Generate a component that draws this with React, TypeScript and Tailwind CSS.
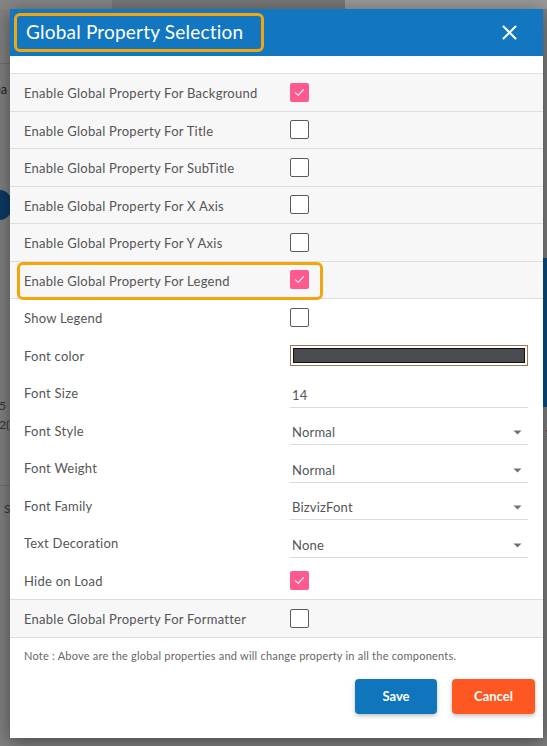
import React from "react";

const Check = ({ on }: { on: boolean }) =>
  on ? (
    <div className="w-[19px] h-[19px] rounded-[2px] bg-[#ff5a8e] flex items-center justify-center">
      <svg width="13" height="13" viewBox="0 0 13 13" fill="none">
        <path d="M2.5 6.8 L5.2 9.3 L10.5 3.6" stroke="white" strokeWidth="1.1" strokeLinecap="round" strokeLinejoin="round" />
      </svg>
    </div>
  ) : (
    <div className="w-[19px] h-[19px] rounded-[2px] border border-[#5a5a5a] bg-white" />
  );

const Caret = () => (
  <svg width="9" height="5" viewBox="0 0 9 5" className="mr-[6px]">
    <path d="M0.5 0.5 L8.5 0.5 L4.5 4.5 Z" fill="#707070" />
  </svg>
);

const GlobalRow = ({ label, on }: { label: string; on: boolean }) => (
  <div className="h-[37.5px] flex items-center bg-[#f7f7f7] border-b border-[#dedede]">
    <div className="w-[280px] pl-[14px] pt-[3px] text-[13px] tracking-[0.25px] text-[#555]">{label}</div>
    <Check on={on} />
  </div>
);

const SubRow = ({ label, children }: { label: string; children: React.ReactNode }) => (
  <div className="h-[37.5px] flex items-center">
    <div className="w-[280px] pl-[14px] pt-[2px] text-[13px] tracking-[0.25px] text-[#555]">{label}</div>
    {children}
  </div>
);

const Underlined = ({ value, caret }: { value: string; caret?: boolean }) => (
  <div className="w-[238px] h-[24px] mt-[6px] border-b border-[#dadada] flex items-center justify-between pl-[2px]">
    <span className="text-[13px] tracking-[0.2px] text-[#555]">{value}</span>
    {caret && <Caret />}
  </div>
);

export default function App() {
  return (
    <div className="relative w-[547px] h-[746px] overflow-hidden bg-[#808080] font-['Lato',sans-serif]">
      {/* page glimpses under overlay */}
      <div className="absolute left-0 top-0 w-[112px] h-[9px] bg-[#858585]" />
      <div className="absolute left-[112px] top-0 w-[233px] h-[9px] bg-[#777777]" />
      <div className="absolute left-[345px] top-0 w-[202px] h-[9px] bg-[#999999]" />
      <div className="absolute left-0 top-[63px] w-[10px] h-px bg-[#6e6e6e]" />
      <div className="absolute left-[-6px] top-[80px] text-[13px] text-[#222]">ea</div>
      <div className="absolute left-[-14px] top-[190px] w-[26px] h-[30px] rounded-full bg-[#0c3a66]" />
      <div className="absolute left-[-1px] top-[397px] text-[12px] text-[#333]">5</div>
      <div className="absolute left-[-1px] top-[416px] text-[12px] text-[#333]">2(</div>
      <div className="absolute left-0 top-[485px] w-[10px] h-px bg-[#6e6e6e]" />
      <div className="absolute left-[4px] top-[500px] text-[12px] text-[#333]">S</div>
      <div className="absolute left-[543px] top-[258px] w-[4px] h-[149px] bg-[#0b4f82]" />
      <div className="absolute left-[545px] top-[424px] text-[12px] text-[#333]">1</div>

      {/* modal */}
      <div className="absolute left-[10px] top-[9px] w-[533px] h-[729px] bg-white shadow-[0_4px_18px_rgba(0,0,0,0.45)]">
        <div className="h-[47px] bg-[#1277c0] flex items-center justify-between pl-[4px] pr-[26px]">
          <div className="h-[39px] w-[250px] border-[3px] border-[#f5a50c] rounded-[6px] flex items-center pl-[9px]">
            <span className="text-[19px] text-white tracking-[0.2px]">Global Property Selection</span>
          </div>
          <svg width="15" height="15" viewBox="0 0 15 15">
            <path d="M1.5 1.5 L13.5 13.5 M13.5 1.5 L1.5 13.5" stroke="white" strokeWidth="2" strokeLinecap="round" />
          </svg>
        </div>
        <div className="h-[18px] border-b border-[#dedede]" />
        <GlobalRow label="Enable Global Property For Background" on />
        <GlobalRow label="Enable Global Property For Title" on={false} />
        <GlobalRow label="Enable Global Property For SubTitle" on={false} />
        <GlobalRow label="Enable Global Property For X Axis" on={false} />
        <GlobalRow label="Enable Global Property For Y Axis" on={false} />
        <div className="relative">
          <GlobalRow label="Enable Global Property For Legend" on />
          <div className="absolute left-[7px] top-0 w-[306px] h-[38.5px] border-[3px] border-[#f5a50c] rounded-[6px]" />
        </div>
        <div className="flex flex-col">
          <SubRow label="Show Legend">
            <Check on={false} />
          </SubRow>
          <SubRow label="Font color">
            <div className="w-[238px] h-[21px] border border-[#9c7a58] p-[2px]">
              <div className="w-full h-full bg-[#4a4b50] border border-[#111]" />
            </div>
          </SubRow>
          <SubRow label="Font Size">
            <Underlined value="14" />
          </SubRow>
          <SubRow label="Font Style">
            <Underlined value="Normal" caret />
          </SubRow>
          <SubRow label="Font Weight">
            <Underlined value="Normal" caret />
          </SubRow>
          <SubRow label="Font Family">
            <Underlined value="BizvizFont" caret />
          </SubRow>
          <SubRow label="Text Decoration">
            <Underlined value="None" caret />
          </SubRow>
          <SubRow label="Hide on Load">
            <Check on />
          </SubRow>
        </div>
        <div className="border-t border-[#dedede]">
          <GlobalRow label="Enable Global Property For Formatter" on={false} />
        </div>
        <div className="pl-[14px] pt-[10px] text-[11px] tracking-[0.22px] text-[#666]">
          Note : Above are the global properties and will change property in all the components.
        </div>
        <div className="flex justify-end gap-[15px] pr-[8px] mt-[15px]">
          <button className="w-[82px] h-[35px] rounded-[4px] bg-[#0f75bd] text-white text-[13px] font-bold shadow-[0_2px_4px_rgba(0,0,0,0.25)]">
            Save
          </button>
          <button className="w-[83px] h-[35px] rounded-[4px] bg-[#fe5722] text-white text-[13px] font-bold shadow-[0_2px_4px_rgba(0,0,0,0.25)]">
            Cancel
          </button>
        </div>
      </div>
    </div>
  );
}
